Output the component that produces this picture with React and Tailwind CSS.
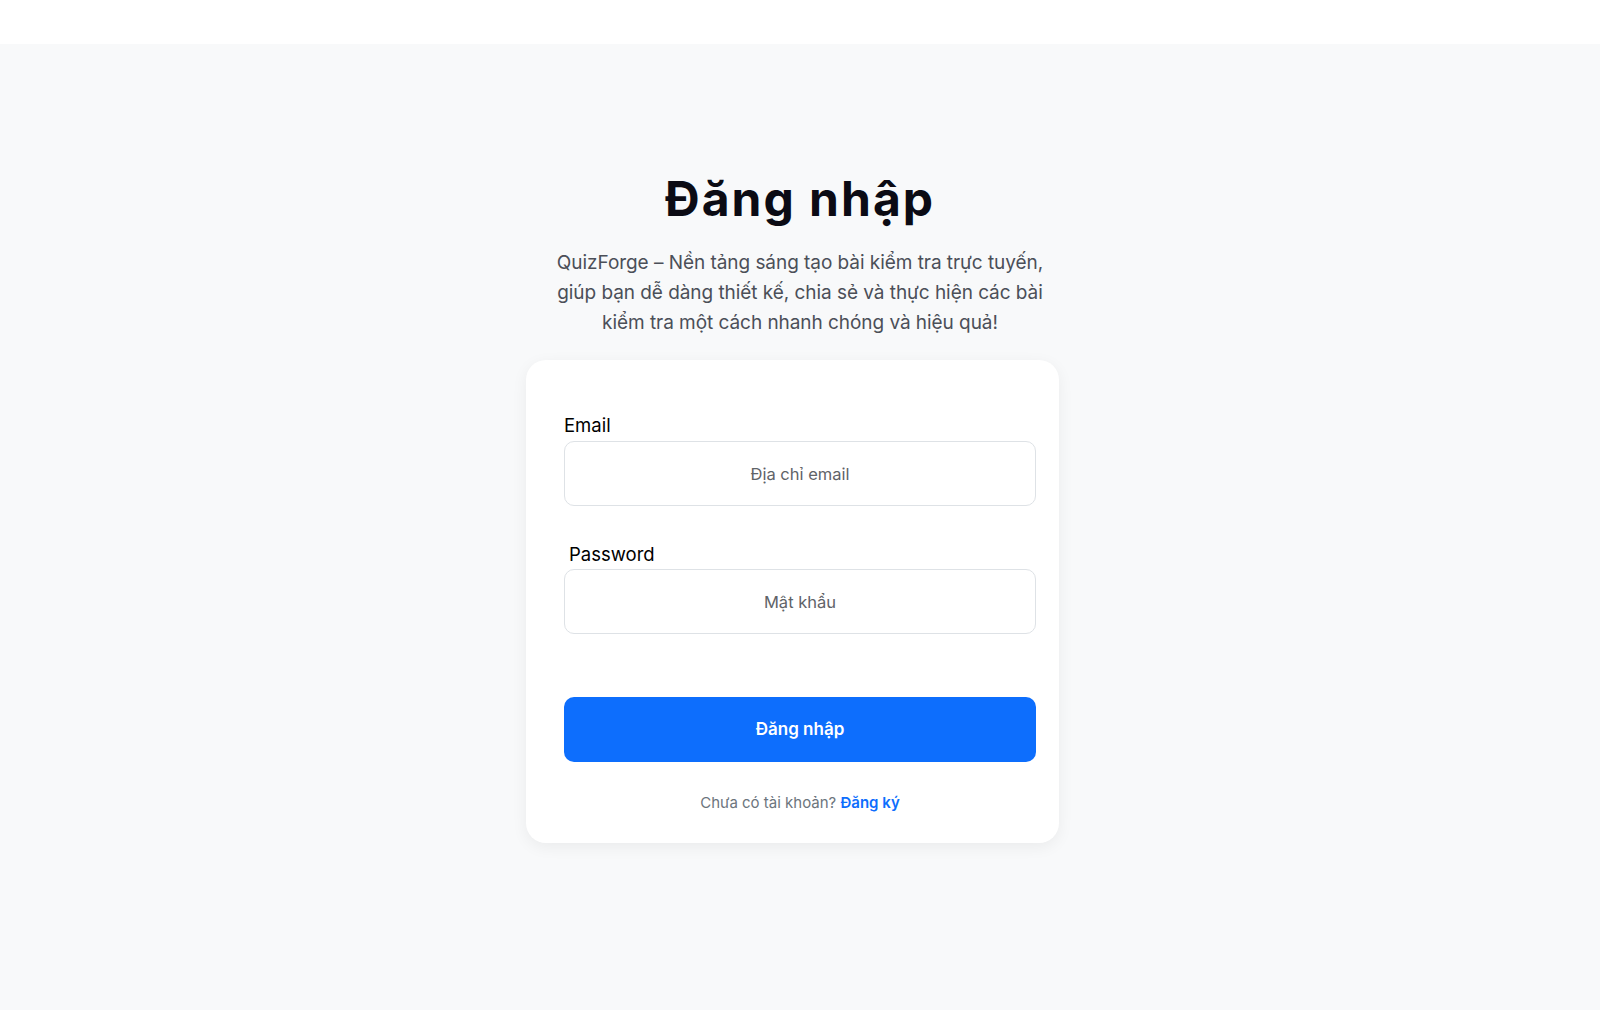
export default function App() {
  const font = { fontFamily: '"Inter", "Noto Sans", sans-serif' };
  return (
    <div className="min-h-[1010px] flex flex-col" style={font}>
      <header className="h-[44px] bg-white shrink-0" />
      <main className="flex-1 bg-[#f8f9fa] flex flex-col items-center pt-[127px]">
        <h1 className="text-[48px] leading-[56px] font-bold text-[#0b0b14] tracking-[2px]">
          Đăng nhập
        </h1>
        <p className="mt-[21px] text-[19px] leading-[30px] text-[#4b4f58] text-center tracking-[-0.05px]">
          <span className="whitespace-nowrap">QuizForge – Nền tảng sáng tạo bài kiểm tra trực tuyến,</span>
          <br />
          <span className="whitespace-nowrap">giúp bạn dễ dàng thiết kế, chia sẻ và thực hiện các bài</span>
          <br />
          <span className="whitespace-nowrap">kiểm tra một cách nhanh chóng và hiệu quả!</span>
        </p>
        <div className="mt-[22px] mr-[15px] w-[533px] bg-white rounded-[20px] shadow-[0_4px_16px_rgba(0,0,0,0.06)] pl-[38px] pr-[23px] pt-[52px] pb-[30px]">
          <form className="flex flex-col" onSubmit={(e) => e.preventDefault()}>
            <label className="text-[18.5px] leading-[27px] text-black mb-[2px]">Email</label>
            <input
              type="email"
              placeholder="Địa chỉ email"
              className="h-[65px] w-full rounded-[10px] border border-[#dee2e6] bg-white text-center text-[16.5px] text-[#212529] placeholder:text-[#5f6368] outline-none"
            />
            <label className="mt-[35px] ml-[5px] text-[18.5px] leading-[27px] text-black mb-[1px]">Password</label>
            <input
              type="password"
              placeholder="Mật khẩu"
              className="h-[65px] w-full rounded-[10px] border border-[#dee2e6] bg-white text-center text-[16.5px] text-[#212529] placeholder:text-[#5f6368] outline-none"
            />
            <button
              type="submit"
              className="mt-[63px] h-[65px] w-full rounded-[10px] bg-[#0d6efd] text-white text-[17px] font-semibold"
            >
              Đăng nhập
            </button>
            <p className="mt-[30px] text-center text-[15px] leading-[21px] text-[#6c757d]">
              Chưa có tài khoản?{" "}
              <a href="#" className="text-[#0d6efd] font-semibold">Đăng ký</a>
            </p>
          </form>
        </div>
      </main>
    </div>
  );
}
